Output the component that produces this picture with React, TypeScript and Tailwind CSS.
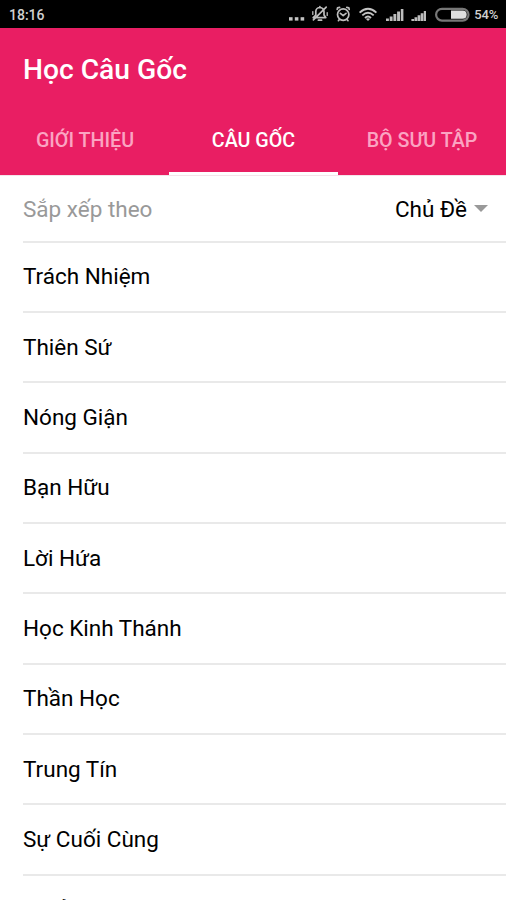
const topics = [
  'Trách Nhiệm',
  'Thiên Sứ',
  'Nóng Giận',
  'Bạn Hữu',
  'Lời Hứa',
  'Học Kinh Thánh',
  'Thần Học',
  'Trung Tín',
  'Sự Cuối Cùng',
  'Trưởng Thành',
];

function StatusIcons() {
  return (
    <svg width="186" height="28" viewBox="284 0 186 28" fill="none" className="absolute left-[284px] top-0">
      <g fill="#c4c4c4">
        <rect x="289" y="17.2" width="3.6" height="3.4" />
        <rect x="294.8" y="17.2" width="3.6" height="3.4" />
        <rect x="300.6" y="17.2" width="3.6" height="3.4" />
      </g>
      <g stroke="#bdbdbd" strokeWidth="1.7" strokeLinecap="round" strokeLinejoin="round">
        <path d="M313.2 17.6h12.6l-1.8-2.6v-3.2a4.1 4.1 0 0 0-8.2-.4V15zM318.4 20.2h3.2M319.9 6.6v1M313.4 19.8l12.8-12.6" />
        <path d="M312.8 11.6v2.8M327.2 12.6v2.8" strokeWidth="1.3" />
        <circle cx="343.2" cy="14.6" r="5.7" />
        <path d="M340.4 13.4l2.8 2.2 2.8-2.2M337.2 9.4l.4-1.6 2-.4M349.2 9.4l-.4-1.6-2-.4M339.4 19.5l-1 1.2M347 19.5l1 1.2" />
      </g>
      <g stroke="#c4c4c4" strokeWidth="1.9">
        <path d="M359.6 12.6q8.4-7.6 16.8 0M362.3 15.4q5.7-5.2 11.4 0M365 18q3-2.8 6 0" />
        <path d="M366.6 18.9l1.4 1.6 1.4-1.6z" fill="#c4c4c4" strokeWidth="1" />
      </g>
      <g fill="#bdbdbd">
        <path d="M386 18.4h2.9V21H386zM389.7 16.4h2.9V21h-2.9zM393.4 14h2.9v7h-2.9zM397.1 11.6h2.9V21h-2.9zM400.8 9h2.6v12h-2.6z" />
        <path d="M411.4 19h2.7v2h-2.7zM414.5 17.2h2.7V21h-2.7zM417.6 15.2h2.7V21h-2.7zM420.7 13.2h2.7V21h-2.7zM423.8 11h2.2v10h-2.2z" />
      </g>
      <rect x="436.1" y="8.8" width="32.4" height="11.8" rx="5.9" stroke="#777" strokeWidth="2.2" />
      <path d="M451 10.6h11.6a4.1 4.1 0 0 1 0 8.2H451z" fill="#dedede" />
    </svg>
  );
}

export default function App() {
  return (
    <div className="relative h-[900px] w-[506px] overflow-hidden bg-white font-['Roboto','Noto_Sans',sans-serif] text-black">
      <header className="bg-[#e91e63]">
        <div className="relative flex h-[28px] items-center justify-between bg-black pl-[9px] pr-[8px] text-[13px] font-medium text-[#d0d0d0]">
          <span className="pt-[2px] text-[14px]">18:16</span>
          <StatusIcons />
          <span className="pt-[2px] tracking-[-0.2px]">54%</span>
        </div>
        <h1 className="flex h-[79px] items-center pl-[23px] pt-[5px] text-[28.2px] font-medium text-white">Học Câu Gốc</h1>
        <nav className="grid h-[68px] grid-cols-[169px_169px_168px] text-[19.7px] font-medium text-[#fba4c2]">
          <div className="flex items-center justify-center pb-[1px] pl-[1px]">GIỚI THIỆU</div>
          <div className="flex items-center justify-center border-b-[3px] border-white pt-[2px] text-white">CÂU GỐC</div>
          <div className="flex items-center justify-center pb-[1px]">BỘ SƯU TẬP</div>
        </nav>
      </header>
      <div className="h-px bg-[#f4e4ea]" />
      <main className="pl-[23px] text-[22.5px]">
        <div className="flex h-[66.5px] items-center justify-between border-b-2 border-[#e9e9e9] pr-[18px] pt-[3px]">
          <span className="text-[#999]">Sắp xếp theo</span>
          <span className="flex items-center gap-[7px]">
            Chủ Đề
            <span className="mb-[3px] border-x-[7px] border-t-[7px] border-x-transparent border-t-[#999]" />
          </span>
        </div>
        {topics.map((topic) => (
          <div key={topic} className="flex h-[70.35px] items-center border-b-[2px] border-[#e9e9e9] pt-[1px]">
            {topic}
          </div>
        ))}
      </main>
    </div>
  );
}
